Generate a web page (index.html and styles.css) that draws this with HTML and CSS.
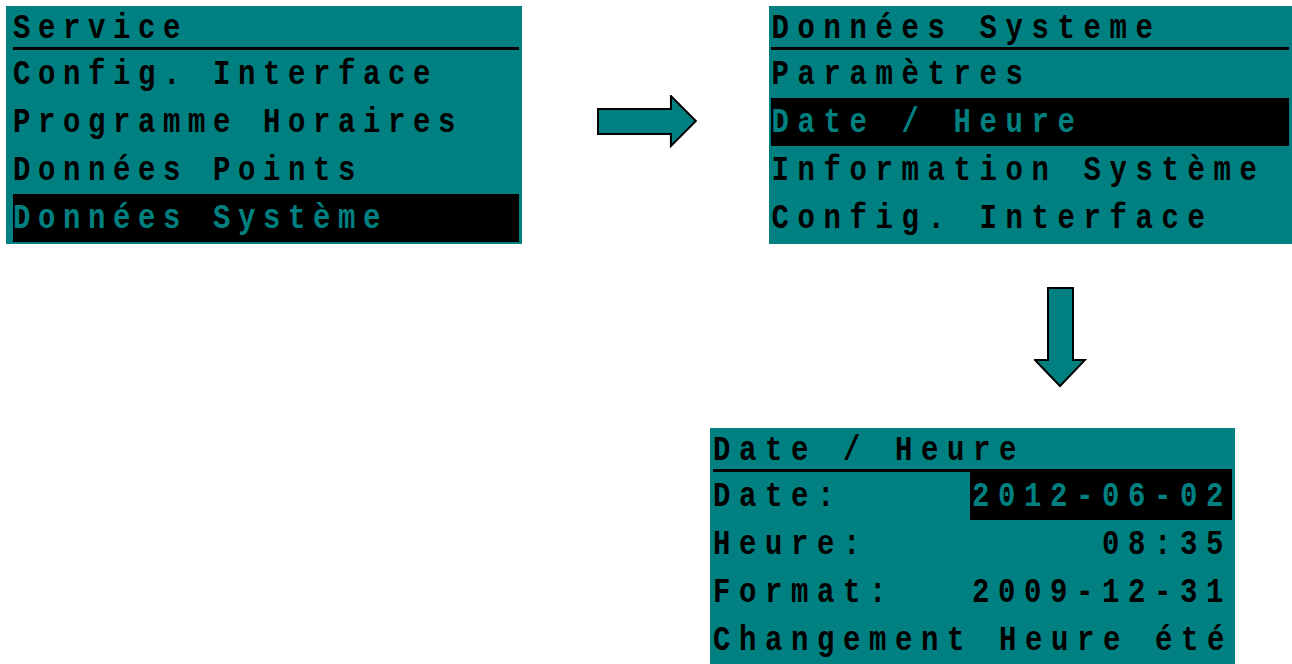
FILE: index.html
```html
<!DOCTYPE html>
<html lang="fr">
<head>
    <meta charset="UTF-8">
    <meta name="viewport" content="width=device-width, initial-scale=1.0">
    <title>Menu Service - Date / Heure</title>
    <link rel="stylesheet" href="styles.css">
</head>
<body>
    <div class="page">
        <div class="top">
            <div class="lcd lcd-service">
                <div class="title"><span class="t">Service</span></div>
                <div class="item"><span class="t">Config. Interface</span></div>
                <div class="item"><span class="t">Programme Horaires</span></div>
                <div class="item"><span class="t">Données Points</span></div>
                <div class="item sel"><span class="t">Données Système</span></div>
            </div>

            <svg class="arrow arrow-right" width="101" height="53" viewBox="0 0 101 53">
                <polygon points="1,14 74,14 74,1 99,26 74,51 74,39 1,39"/>
            </svg>

            <div class="lcd lcd-system">
                <div class="title"><span class="t">Données Systeme</span></div>
                <div class="item"><span class="t">Paramètres</span></div>
                <div class="item sel"><span class="t">Date / Heure</span></div>
                <div class="item"><span class="t">Information Système</span></div>
                <div class="item"><span class="t">Config. Interface</span></div>
            </div>
        </div>

        <svg class="arrow arrow-down" width="53" height="102" viewBox="0 0 53 102">
            <polygon points="14,2 39,2 39,74 51,74 26,100 1,74 14,74"/>
        </svg>

        <div class="lcd lcd-date">
            <div class="title"><span class="t">Date / Heure</span></div>
            <div class="item field">
                <span class="t">Date:</span>
                <span class="value sel"><span class="t">2012-06-02</span></span>
            </div>
            <div class="item field">
                <span class="t">Heure:</span>
                <span class="value"><span class="t">08:35</span></span>
            </div>
            <div class="item field">
                <span class="t">Format:</span>
                <span class="value"><span class="t">2009-12-31</span></span>
            </div>
            <div class="item"><span class="t">Changement Heure été</span></div>
        </div>
    </div>
</body>
</html>
```

FILE: styles.css
```css
* { margin: 0; padding: 0; box-sizing: border-box; }
body { background: #fff; color: #000; font-family: "Liberation Mono", "Courier New", monospace; font-weight: bold;
       font-size: 29px; letter-spacing: 7.6px; width: 1292px; height: 664px; overflow: hidden; }
.page { padding-top: 6px; }
.top { display: flex; align-items: flex-start; }

/* lcd screens */
.lcd { background: #008080; height: 238px; padding: 0 3px 0 7px; white-space: nowrap; }
.lcd-service { width: 516px; margin-left: 6px; }
.lcd-system { width: 523px; margin-left: 72px; padding-left: 2px; letter-spacing: 8.6px; }
.lcd-date { width: 525px; height: 240px; margin-left: 710px; margin-top: 40px; padding-left: 3px; letter-spacing: 8.6px; }

.title { height: 44px; line-height: 41px; border-bottom: 3px solid #000; }
.item { height: 48px; line-height: 48px; }
.field { display: flex; justify-content: space-between; }
.sel { background: #000; color: #008080; }
.value { padding: 0 0 0 2px; }

.t { display: inline-block; transform: translateY(2px) scaleY(1.2); }

/* arrows */
.arrow { display: block; }
.arrow polygon { fill: #008080; stroke: #000; stroke-width: 2; stroke-linejoin: miter; }
.arrow-right { margin-left: 75px; margin-top: 89px; }
.arrow-down { margin-left: 1034px; margin-top: 42px; }
```
